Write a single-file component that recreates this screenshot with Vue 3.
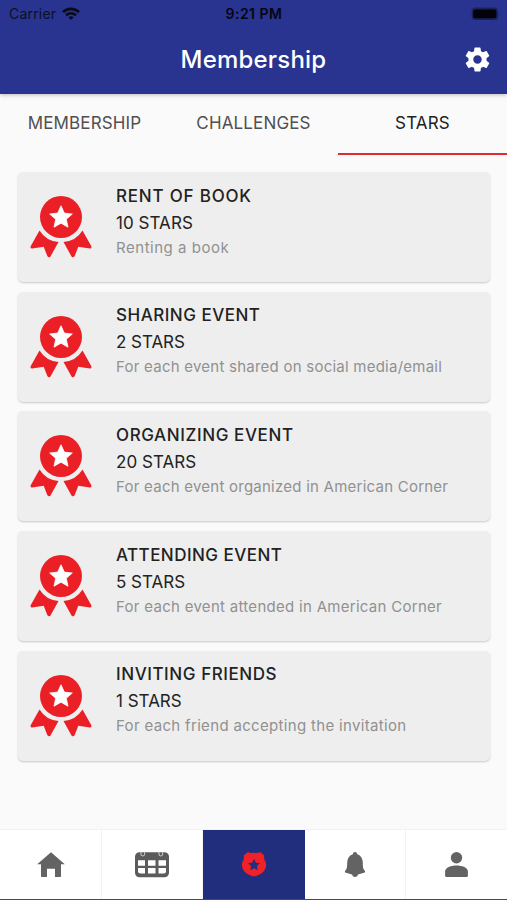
<script setup>
const tabs = ['MEMBERSHIP', 'CHALLENGES', 'STARS']
const activeTab = 'STARS'
const rewards = [
  { title: 'RENT OF BOOK', stars: '10 STARS', note: 'Renting a book', track: [0.8, 0.05, 0.53] },
  { title: 'SHARING EVENT', stars: '2 STARS', note: 'For each event shared on social media/email', track: [0.5, -0.05, 0.24] },
  { title: 'ORGANIZING EVENT', stars: '20 STARS', note: 'For each event organized in American Corner', track: [0.6, 0.05, 0.24] },
  { title: 'ATTENDING EVENT', stars: '5 STARS', note: 'For each event attended in American Corner', track: [0.46, 0, 0.29] },
  { title: 'INVITING FRIENDS', stars: '1 STARS', note: 'For each friend accepting the invitation', track: [0.57, 0, 0.33] },
]
const spacing = (px) => ({ letterSpacing: px + 'px' })
</script>

<template>
  <div class="screen">
    <header class="header">
      <div class="status">
        <div class="carrier">
          <span>Carrier</span>
          <svg class="wifi" viewBox="0 0 18 14" fill="none" stroke="#090b19" stroke-width="2.6">
            <path d="M1 5.2C5.5 .7 12.5 .7 17 5.2" />
            <path d="M4 8.3C7 5.6 11 5.6 14 8.3" />
            <path d="M6.4 10.2Q9 8.2 11.6 10.2L9 13Z" fill="#090b19" stroke="none" />
          </svg>
        </div>
        <span class="clock">9:21 PM</span>
        <svg class="battery" viewBox="0 0 30 14">
          <rect x=".7" y=".6" width="26.3" height="12.4" rx="3.5" fill="#1a225c" />
          <rect x="2.3" y="2.4" width="23" height="8.8" rx="2" fill="#020208" />
          <path d="M28 5v4q1.6-2 0-4" fill="#1c2565" />
        </svg>
      </div>
      <div class="titlebar">
        <h1>Membership</h1>
        <svg class="gear" viewBox="0 0 24 24" fill="#fff">
          <path d="M19.43 12.98c.04-.32.07-.64.07-.98s-.03-.66-.07-.98l2.11-1.65c.19-.15.24-.42.12-.64l-2-3.46c-.12-.22-.39-.3-.61-.22l-2.49 1c-.52-.4-1.08-.73-1.69-.98l-.38-2.65C14.46 2.18 14.25 2 14 2h-4c-.25 0-.46.18-.49.42l-.38 2.65c-.61.25-1.17.59-1.69.98l-2.49-1c-.23-.09-.49 0-.61.22l-2 3.46c-.13.22-.07.49.12.64l2.11 1.65c-.04.32-.07.65-.07.98s.03.66.07.98l-2.11 1.65c-.19.15-.24.42-.12.64l2 3.46c.12.22.39.3.61.22l2.49-1c.52.4 1.08.73 1.69.98l.38 2.65c.03.24.24.42.49.42h4c.25 0 .46-.18.49-.42l.38-2.65c.61-.25 1.17-.59 1.69-.98l2.49 1c.23.09.49 0 .61-.22l2-3.46c.12-.22.07-.49-.12-.64l-2.11-1.65zM12 15.5c-1.93 0-3.5-1.57-3.5-3.5s1.57-3.5 3.5-3.5 3.5 1.57 3.5 3.5-1.57 3.5-3.5 3.5z" />
        </svg>
      </div>
    </header>

    <nav class="tabs">
      <div v-for="tab in tabs" :key="tab" class="tab" :class="{ active: tab === activeTab }">{{ tab }}</div>
    </nav>

    <main class="list">
      <article v-for="item in rewards" :key="item.title" class="card">
        <svg class="medal" viewBox="0 0 62 62" fill="#eb2027">
          <circle cx="31" cy="21" r="21" />
          <path d="M31 9.8l3.3 7.3 8 .9-6 5.3 1.7 7.9-7-4-7 4 1.7-7.9-6-5.3 8-.9z" fill="#fff" stroke="#fff" stroke-width=".8" stroke-linejoin="round" />
          <path d="M9.5 34.5Q16 45 28.5 46L20.5 60.5Q19 62.3 17.4 60.3L13.7 50.8 2.2 52.4Q-.2 52.3 .8 50Z" />
          <path d="M52.5 34.5Q46 45 33.5 46L41.5 60.5Q43 62.3 44.6 60.3L48.3 50.8 59.8 52.4Q62.2 52.3 61.2 50Z" />
        </svg>
        <div class="text">
          <h2><span :style="spacing(item.track[0])">{{ item.title }}</span></h2>
          <p class="stars"><span :style="spacing(item.track[1])">{{ item.stars }}</span></p>
          <p class="note"><span :style="spacing(item.track[2])">{{ item.note }}</span></p>
        </div>
      </article>
    </main>

    <nav class="bottom">
      <div class="cell">
        <svg viewBox="0 0 40 40" fill="#636363"><path d="M20 7.2L33.8 19.2H30V31.3Q30 32 29.3 32H24V23.8H16V32H10.7Q10 32 10 31.3V19.2H6.2Z" /></svg>
      </div>
      <div class="cell">
        <svg viewBox="0 0 40 40">
          <rect x="3" y="7.2" width="34" height="25" rx="4.5" fill="#5b5b5b" />
          <path d="M6 15.2h7v5.5H6zM16 15.2h7.5v5.5H16zM26.5 15.2h7.5v5.5h-7.5zM6 23h7v5.5H8.5Q6 28.5 6 26.5zM16 23h7.5v5.5H16zM26.5 23h7.5v3.5q0 2-2 2h-5.5z" fill="#fff" />
          <path d="M9 7v3.2q1.8 1.6 3.6 0V7M27 7v3.2q1.8 1.6 3.6 0V7" fill="none" stroke="#ccc" stroke-width="1" />
        </svg>
      </div>
      <div class="cell current">
        <svg viewBox="0 0 40 40">
          <path d="M20 8.3Q23 9.2 26 7.9L29.6 10.8Q28.8 14 30.8 17C33.2 23.5 28.5 28.5 20 30.8C11.5 28.5 6.8 23.5 9.2 17Q11.2 14 10.4 10.8L14 7.9Q17 9.2 20 8.3Z" fill="#ee2228" stroke="#ee2228" stroke-width="1.4" stroke-linejoin="round" />
          <path d="M20 13.8l1.8 3.9 4.2.5-3.1 2.9.8 4.2-3.7-2.1-3.7 2.1.8-4.2-3.1-2.9 4.2-.5z" fill="#212e7e" />
        </svg>
      </div>
      <div class="cell">
        <svg viewBox="0 0 40 40" fill="#636363"><path d="M20 7q2 0 2.2 2.2C26 10.5 27.8 13.5 27.8 18C27.8 23 28.3 24 30 26q.6 1.6-1 1.8L23 29.4q-.6 2.6-3 2.6t-3-2.6L11 27.8q-1.600-.2-1-1.8C11.7 24 12.2 23 12.2 18C12.2 13.5 14 10.5 17.8 9.2Q18 7 20 7Z" /></svg>
      </div>
      <div class="cell">
        <svg viewBox="0 0 40 40" fill="#636363">
          <circle cx="19.5" cy="12.8" r="5.7" />
          <path d="M8.1 30.5V26.5C8.1 22.500 14 20.5 19.5 20.5S30.9 22.5 30.9 26.5V30.5Q30.9 32 29.5 32H9.5Q8.1 32 8.1 30.5Z" />
        </svg>
      </div>
    </nav>
  </div>
</template>

<style>
body {
  margin: 0;
}
</style>

<style scoped>
* {
  box-sizing: border-box;
}
.screen {
  display: flex;
  flex-direction: column;
  width: 507px;
  height: 900px;
  overflow: hidden;
  background: #fafafa;
  font-family: Inter, Roboto, sans-serif;
  color: #222;
}
.header {
  height: 94px;
  background: #28348f;
  box-shadow: 0 1px 4px rgba(0, 0, 0, 0.25);
}
.status {
  display: grid;
  grid-template-columns: 1fr auto 1fr;
  align-items: center;
  height: 27px;
  padding: 0 6px 0 9px;
  font-size: 14px;
  line-height: 27px;
  color: #0c1026;
}
.carrier {
  display: flex;
  align-items: center;
  gap: 6px;
  letter-spacing: 0.2px;
}
.wifi {
  width: 18px;
  height: 14px;
}
.clock {
  margin-right: 2px;
  font-size: 14px;
  font-weight: 600;
  line-height: 27px;
  letter-spacing: 0.5px;
  color: #05060f;
}
.battery {
  justify-self: end;
  width: 30px;
  height: 14px;
}
.titlebar {
  display: grid;
  grid-template-columns: 1fr auto 1fr;
  align-items: center;
  height: 66px;
  padding: 0 15px;
}
h1 {
  grid-column: 2;
  margin: 0;
  font-size: 24px;
  font-weight: 500;
  line-height: 30px;
  letter-spacing: 0.2px;
  color: #fff;
}
.gear {
  justify-self: end;
  width: 29px;
  height: 29px;
  margin-bottom: 1px;
}
.tabs {
  display: flex;
  height: 61px;
}
.tab {
  flex: 1;
  border-bottom: 2px solid transparent;
  text-align: center;
  font-size: 17px;
  line-height: 58px;
  letter-spacing: 0.15px;
  color: #505050;
}
.tab.active {
  border-color: #e12b32;
  color: #222;
}
.list {
  display: flex;
  flex-direction: column;
  gap: 9.7px;
  flex: 1;
  padding: 17px 17px 0 18px;
}
.card {
  display: flex;
  height: 110px;
  padding: 10px 12px;
  border-radius: 5px;
  background: #eee;
  box-shadow: 0 1px 2px rgba(0, 0, 0, 0.2);
}
.medal {
  flex: none;
  width: 62px;
  height: 62px;
  margin-top: 14px;
}
.text {
  padding: 0.6px 0 0 24px;
  white-space: nowrap;
}
h2,
p {
  margin: 0;
}
h2 {
  font-size: 17px;
  font-weight: 500;
  line-height: 27px;
}
.stars {
  font-size: 17px;
  line-height: 27px;
}
.note {
  font-size: 15px;
  line-height: 22px;
  color: #919191;
}
.bottom {
  display: grid;
  grid-template-columns: 102px 101px 102px 101px 101px;
  height: 71px;
  border-top: 1px solid #f2f2f2;
  border-bottom: 1px solid #3a4599;
  background: #fff;
}
.cell {
  display: flex;
  align-items: center;
  justify-content: center;
  border-right: 1px solid #f3f3f3;
}
.cell:last-child {
  border-right: 0;
}
.cell svg {
  width: 40px;
  height: 40px;
}
.cell.current {
  border: 0;
  background: #212e7e;
}
</style>
